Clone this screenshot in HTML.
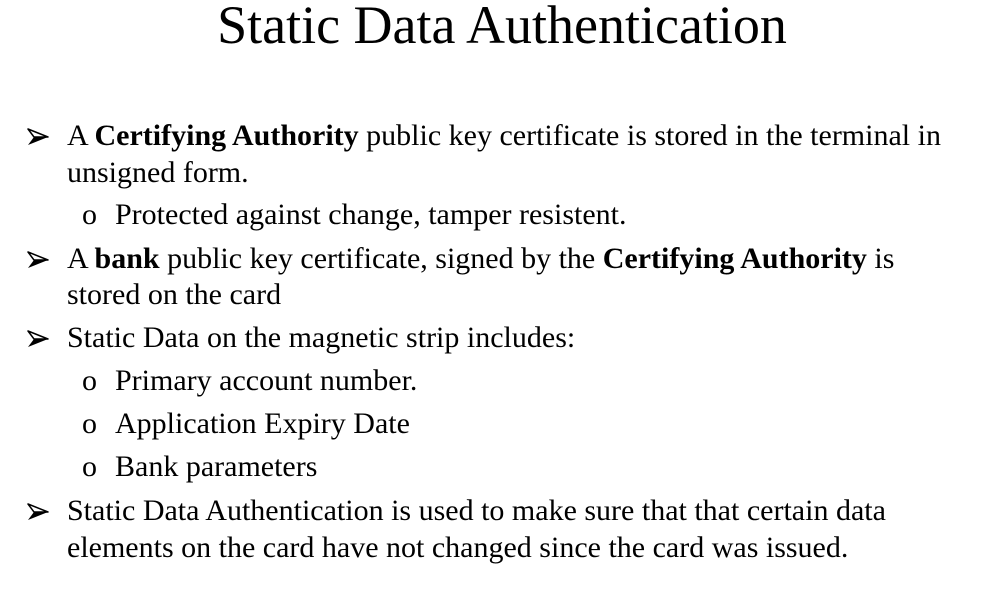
<!DOCTYPE html><html><head><style>
body{margin:0;width:984px;height:593px;background:#fff;position:relative;overflow:hidden;font-family:"Liberation Serif","Times New Roman",serif;color:#000}
.l{position:absolute;font-size:30px;line-height:36px;white-space:nowrap}
b{font-family:"Liberation Serif",serif;font-weight:bold}
.t{position:absolute;left:0;width:1004px;text-align:center;top:-5px;font-size:54px;line-height:60px}
.a{position:absolute;left:27px;width:22px;height:18px}
.s{left:82px}
</style></head><body>
<div class="t">Static Data Authentication</div>
<svg width="0" height="0" style="position:absolute"><defs><symbol id="ar" viewBox="0 0 22 18"><path d="M1 1 L21 9 L1 17 L7 9 Z" fill="#000"/><path d="M1 1 L21 9 L7 9 Z" fill="#fff" stroke="#000" stroke-width="1.5" stroke-linejoin="round"/></symbol></defs></svg>
<svg class="a" style="top:128px"><use href="#ar"/></svg>
<div class="l" style="left:67px;top:118px">A <b>Certifying Authority</b> public key certificate is stored in the terminal in</div>
<div class="l" style="left:67px;top:155px">unsigned form.</div>
<div class="l s" style="top:197px">o</div>
<div class="l" style="left:115px;top:197px">Protected against change, tamper resistent.</div>
<svg class="a" style="top:251px"><use href="#ar"/></svg>
<div class="l" style="left:67px;top:241px">A <b>bank</b> public key certificate, signed by the <b>Certifying Authority</b> is</div>
<div class="l" style="left:67px;top:277px">stored on the card</div>
<svg class="a" style="top:330px"><use href="#ar"/></svg>
<div class="l" style="left:67px;top:320px">Static Data on the magnetic strip includes:</div>
<div class="l s" style="top:363px">o</div>
<div class="l" style="left:115px;top:363px">Primary account number.</div>
<div class="l s" style="top:406px">o</div>
<div class="l" style="left:115px;top:406px">Application Expiry Date</div>
<div class="l s" style="top:449px">o</div>
<div class="l" style="left:115px;top:449px">Bank parameters</div>
<svg class="a" style="top:503px"><use href="#ar"/></svg>
<div class="l" style="left:67px;top:493px">Static Data Authentication is used to make sure that that certain data</div>
<div class="l" style="left:67px;top:530px">elements on the card have not changed since the card was issued.</div>
</body></html>
